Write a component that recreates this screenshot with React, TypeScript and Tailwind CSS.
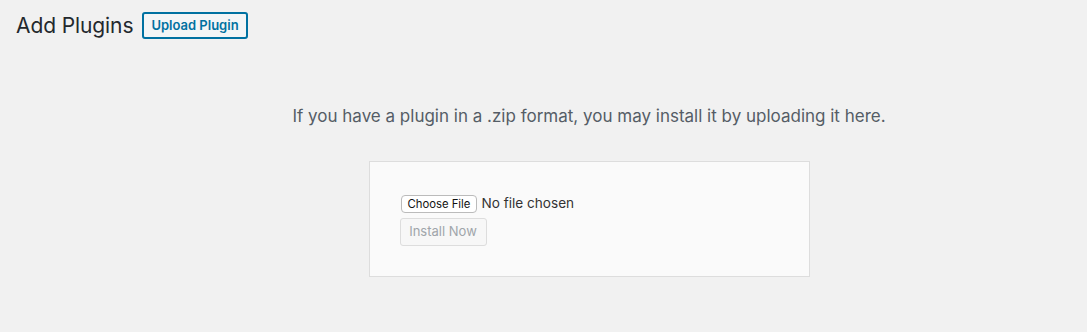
export default function App() {
  return (
    <div className="h-[332px] w-[1087px] overflow-hidden bg-[#f1f1f1] font-['Inter',sans-serif] text-[#23282d]">
      <div className="flex items-center gap-[9px] px-4 pt-[12px]">
        <h1 className="text-[21px] leading-[27px] font-normal tracking-[-0.1px]">Add Plugins</h1>
        <button
          type="button"
          className="h-[27px] rounded-[3px] border-2 border-[#0071a1] bg-[#f3f5f6] px-[7px] text-[13px] font-semibold text-[#0071a1]"
        >
          Upload Plugin
        </button>
      </div>

      <div className="ml-4 w-[1146px] pt-[66px] text-center">
        <p className="text-[17px] leading-[22px] text-[#555d66]">
          If you have a plugin in a .zip format, you may install it by uploading it here.
        </p>
        <form className="mt-[34px] inline-flex w-[441px] flex-col items-start border border-[#ddd] bg-[#fafafa] p-[30px] text-left">
          <div className="flex h-[22px] items-end gap-[4px] pb-px">
            <span className="ml-px flex h-[18px] items-center rounded-[4px] border border-[#bbb] bg-white px-[6px] text-[11.3px] text-[#111]">
              Choose File
            </span>
            <span className="text-[13.6px] leading-[20px] text-[#333]">No file chosen</span>
          </div>
          <button
            type="button"
            disabled
            className="mt-[4px] h-[28px] w-[87px] rounded-[3px] border border-[#ddd] bg-[#f7f7f7] text-[13px] text-[#a0a5aa]"
          >
            Install Now
          </button>
        </form>
      </div>
    </div>
  );
}
